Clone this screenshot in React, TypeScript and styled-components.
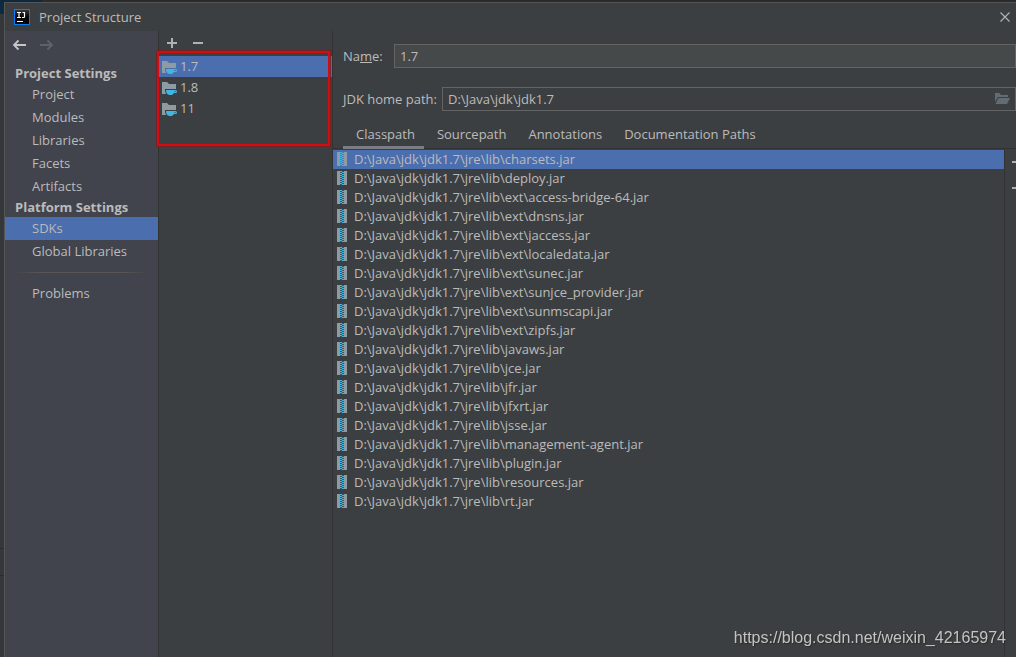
import React, { useState } from "react";
import styled, { createGlobalStyle, css } from "styled-components";

const colors = {
  panel: "#3c3f41",
  sidebar: "#41444d",
  line: "#323232",
  text: "#bbbbbb",
  select: "#4b6eaf",
  field: "#45494a",
  fieldBorder: "#646464",
  icon: "#afb1b3",
};

const GlobalStyle = createGlobalStyle`
  * { box-sizing: border-box; }
  html, body, #root { height: 100%; }
  body {
    margin: 0;
    overflow: hidden;
    background: ${colors.panel};
    color: ${colors.text};
    font: 13px/19px "Open Sans", "Noto Sans", sans-serif;
  }
  button, input { font: inherit; color: inherit; }
  button { border: 0; padding: 0; background: none; text-align: left; }
  ul { list-style: none; margin: 0; padding: 0; }
  svg { display: block; flex: none; }
`;

const Screen = styled.div`
  display: flex;
  flex-direction: column;
  height: 100%;
`;

const EditorTop = styled.div`
  flex: none;
  height: 2px;
  background: linear-gradient(90deg, #0d293e 0 42px, #2b2b2b 42px);
`;

const Desktop = styled.div`
  flex: 1;
  display: flex;
  min-height: 0;
`;

const EditorEdge = styled.div`
  flex: none;
  display: flex;
  flex-direction: column;
  justify-content: flex-end;
  width: 4px;
  background: linear-gradient(#0d2b40 0 12px, #35383a 12px);
`;

const EdgeBlock = styled.div<{ $tall?: boolean }>`
  height: ${(p) => (p.$tall ? 82 : 27)}px;
  border-top: 1px solid #2b2b2b;
`;

const Dialog = styled.main`
  flex: 1;
  min-width: 0;
  display: flex;
  flex-direction: column;
  border: solid #555555;
  border-width: 1px 0 0 1px;
`;

const TitleBar = styled.header`
  flex: none;
  display: flex;
  align-items: center;
  height: 28px;
  padding: 0 3px 0 9px;
  gap: 9px;
`;

const Title = styled.h1`
  flex: 1;
  margin: 0;
  font-size: 13px;
  font-weight: 400;
`;

const Body = styled.div`
  flex: 1;
  display: flex;
  min-height: 0;
`;

const Sidebar = styled.nav`
  flex: none;
  width: 154px;
  background: ${colors.sidebar};
  border-right: 1px solid ${colors.line};
`;

const History = styled.div`
  display: flex;
  align-items: center;
  gap: 11px;
  height: 28px;
  margin-bottom: 5px;
  padding-left: 7px;
`;

const IconButton = styled.button`
  flex: none;
  width: 16px;
  height: 16px;
`;

const GroupTitle = styled.h2`
  margin: 0;
  padding-left: 10px;
  font-size: 13px;
  line-height: 19px;
  font-weight: 700;
`;

const selected = css`
  background: ${colors.select};
`;

const NavItem = styled.button<{ $active?: boolean }>`
  display: block;
  width: 100%;
  height: 23px;
  padding-left: 27px;
  ${(p) => p.$active && selected}
`;

const Divider = styled.hr`
  height: 1px;
  margin: 9px;
  border: 0;
  background: linear-gradient(90deg, transparent, #5a5654 20% 80%, transparent);
`;

const SdkPanel = styled.section`
  position: relative;
  flex: none;
  width: 174px;
  border-right: 1px solid ${colors.line};
`;

const Toolbar = styled.div`
  display: flex;
  align-items: center;
  gap: 10px;
  height: 25px;
  padding: 0 0 2px 5px;
`;

const SdkItem = styled.button<{ $active?: boolean }>`
  display: flex;
  align-items: center;
  gap: 3px;
  width: 100%;
  height: 21px;
  padding-left: 2px;
  ${(p) => p.$active && selected}
`;

const Highlight = styled.div`
  position: absolute;
  top: 20px;
  left: -2px;
  right: 2px;
  height: 95px;
  border: 2px solid #cf0e11;
  box-shadow: 0 0 0 1px #7d1c1ecc;
  pointer-events: none;
`;

const Details = styled.section`
  flex: 1;
  min-width: 0;
  display: flex;
  flex-direction: column;
`;

const Fields = styled.div`
  flex: none;
  display: flex;
  flex-direction: column;
  gap: 19px;
  padding: 13px 0 8px 10px;
`;

const Field = styled.div`
  display: flex;
  align-items: center;
`;

const FieldLabel = styled.label<{ $width: number }>`
  flex: none;
  width: ${(p) => p.$width}px;
  white-space: nowrap;
`;

const InputBox = styled.div<{ $filled?: boolean }>`
  flex: 1;
  min-width: 0;
  display: flex;
  align-items: center;
  height: 24px;
  padding: 0 5px;
  border: 1px solid ${colors.fieldBorder};
  background: ${(p) => (p.$filled ? colors.field : "transparent")};
`;

const Input = styled.input`
  flex: 1;
  min-width: 0;
  padding: 0;
  border: 0;
  outline: 0;
  background: none;
`;

const Tabs = styled.div`
  flex: none;
  display: flex;
  height: 30px;
  padding-left: 10px;
  border-bottom: 1px solid ${colors.line};
`;

const Tab = styled.button<{ $active?: boolean }>`
  height: 30px;
  padding: 6px 9px 2px 13px;
  border-bottom: 3px solid ${(p) => (p.$active ? "#7a7e84" : "transparent")};
  white-space: nowrap;
`;

const Roots = styled.div`
  flex: 1;
  display: flex;
  min-height: 0;
`;

const FileList = styled.ul`
  flex: 1;
  min-width: 0;
  padding-top: 1px;
  border-right: 1px solid ${colors.line};
`;

const FileRow = styled.button<{ $active?: boolean }>`
  display: flex;
  align-items: center;
  gap: 7px;
  width: 100%;
  height: 19px;
  padding-left: 4px;
  white-space: nowrap;
  ${(p) => p.$active && selected}
`;

const SideTools = styled.div`
  flex: none;
  display: flex;
  flex-direction: column;
  gap: 10px;
  width: 11px;
  padding: 5px 0 0 4px;
  overflow: hidden;
`;

const Watermark = styled.div`
  position: fixed;
  right: 10px;
  bottom: 8px;
  color: #c3c4c4;
  font: 16px/22px "Liberation Sans", Arial, sans-serif;
  text-shadow: 1px 1px 1px #2b2b2b;
`;

const AppLogo = () => (
  <svg width="16" height="16" viewBox="0 0 16 16" aria-hidden="true">
    <defs>
      <linearGradient id="logo" x1="0" y1="0" x2="0" y2="1">
        <stop offset="0" stopColor="#3a3a3a" />
        <stop offset="0.5" stopColor="#050505" />
      </linearGradient>
    </defs>
    <rect x="0.5" y="0.5" width="15" height="15" fill="url(#logo)" stroke="#087cfa" />
    <path d="M3 3.5h4M5 3.5v5M3 8.5h4M8.500 3.500h2v4.200q0 .8-.8.8H8" fill="none" stroke="#fff" strokeWidth="1.2" />
    <path d="M3 12.5h6" stroke="#fff" />
  </svg>
);

const Arrow = ({ forward }: { forward?: boolean }) => (
  <svg width="16" height="16" viewBox="0 0 16 16" aria-hidden="true">
    <path
      d={forward ? "M1 8h12M8.5 3.5L13 8l-4.5 4.5" : "M14 8H2M6.5 3.5L2 8l4.5 4.5"}
      fill="none"
      stroke={forward ? "#5f6265" : "#c4c5c7"}
      strokeWidth="1.8"
    />
  </svg>
);

const Sign = ({ plus }: { plus?: boolean }) => (
  <svg width="16" height="16" viewBox="0 0 16 16" shapeRendering="crispEdges" aria-hidden="true">
    <path d={plus ? "M3 7h4V3h2v4h4v2H9v4H7V9H3z" : "M3 7h10v2H3z"} fill={colors.icon} />
  </svg>
);

const Close = () => (
  <svg width="16" height="16" viewBox="0 0 16 16" aria-hidden="true">
    <path d="M3.5 3.5l9 9M12.5 3.5l-9 9" stroke="#b4b6b8" strokeWidth="1.1" />
  </svg>
);

const SdkIcon = () => (
  <svg width="16" height="17" viewBox="0 -1 16 17" aria-hidden="true">
    <path d="M1 2h5l2 2h7v5H4v2l1 3H1z" fill="#8f9ba3" />
    <path d="M5 10h9.500q1.500 0 1.500 1.500T14.500 13h-1.600q-1 2-2.600 2H8.500Q5 14.500 5 10z" fill="#40b6e0" />
    <path d="M13.700 11h.8v1h-1z" fill="#3c3f41" />
  </svg>
);

const FolderIcon = () => (
  <svg width="16" height="16" viewBox="0 0 16 16" aria-hidden="true">
    <path d="M1 2h4.500l1.500 2h7v2H4L1 11z" fill="#626c72" />
    <path d="M4.500 7H16l-3 6H1.500z" fill="#626c72" />
  </svg>
);

const ZIP_ROWS = [0, 2, 4, 6, 8, 10, 12];

const JarIcon = () => (
  <svg width="10" height="15" viewBox="0 0 10 15" shapeRendering="crispEdges" aria-hidden="true">
    <path d="M0 0h3v14H0zM7 0h3v14H7z" fill="#8f9ba3" />
    <path d="M3 0h4v14H3z" fill="#40b6e0" opacity="0.2" />
    {ZIP_ROWS.map((y) => (
      <path key={y} d={`M3 ${y}h2v1H3zM5 ${y + 1}h2v1H5z`} fill="#40b6e0" />
    ))}
  </svg>
);

const PROJECT = ["Project", "Modules", "Libraries", "Facets", "Artifacts"];
const PLATFORM = ["SDKs", "Global Libraries"];
const SDKS = ["1.7", "1.8", "11"];
const TABS = ["Classpath", "Sourcepath", "Annotations", "Documentation Paths"];
const JARS = [
  "charsets", "deploy", "ext\\access-bridge-64", "ext\\dnsns", "ext\\jaccess",
  "ext\\localedata", "ext\\sunec", "ext\\sunjce_provider", "ext\\sunmscapi",
  "ext\\zipfs", "javaws", "jce", "jfr", "jfxrt", "jsse", "management-agent",
  "plugin", "resources", "rt",
];

export default function App() {
  const [page, setPage] = useState("SDKs");
  const [sdk, setSdk] = useState("1.7");
  const [tab, setTab] = useState("Classpath");
  const [jar, setJar] = useState("charsets");

  const navItem = (name: string) => (
    <NavItem key={name} $active={page === name} onClick={() => setPage(name)}>
      {name}
    </NavItem>
  );

  return (
    <Screen>
      <GlobalStyle />
      <EditorTop />
      <Desktop>
        <EditorEdge>
          <EdgeBlock />
          <EdgeBlock $tall />
        </EditorEdge>
        <Dialog>
          <TitleBar>
            <AppLogo />
            <Title>Project Structure</Title>
            <IconButton aria-label="Close"><Close /></IconButton>
          </TitleBar>
          <Body>
            <Sidebar>
              <History>
                <IconButton aria-label="Back"><Arrow /></IconButton>
                <IconButton aria-label="Forward" disabled><Arrow forward /></IconButton>
              </History>
              <GroupTitle>Project Settings</GroupTitle>
              {PROJECT.map(navItem)}
              <GroupTitle>Platform Settings</GroupTitle>
              {PLATFORM.map(navItem)}
              <Divider />
              {navItem("Problems")}
            </Sidebar>
            <SdkPanel>
              <Toolbar>
                <IconButton aria-label="Add SDK"><Sign plus /></IconButton>
                <IconButton aria-label="Remove SDK"><Sign /></IconButton>
              </Toolbar>
              {SDKS.map((name) => (
                <SdkItem key={name} $active={sdk === name} onClick={() => setSdk(name)}>
                  <SdkIcon />
                  {name}
                </SdkItem>
              ))}
              <Highlight />
            </SdkPanel>
            <Details>
              <Fields>
                <Field>
                  <FieldLabel htmlFor="name" $width={51}>Na<u>m</u>e:</FieldLabel>
                  <InputBox $filled>
                    <Input id="name" defaultValue="1.7" />
                  </InputBox>
                </Field>
                <Field>
                  <FieldLabel htmlFor="home" $width={99}>JDK home path:</FieldLabel>
                  <InputBox>
                    <Input id="home" defaultValue={"D:\\Java\\jdk\\jdk1.7"} />
                    <IconButton aria-label="Browse"><FolderIcon /></IconButton>
                  </InputBox>
                </Field>
              </Fields>
              <Tabs role="tablist">
                {TABS.map((name) => (
                  <Tab key={name} role="tab" aria-selected={tab === name} $active={tab === name} onClick={() => setTab(name)}>
                    {name}
                  </Tab>
                ))}
              </Tabs>
              <Roots>
                <FileList>
                  {JARS.map((name) => (
                    <li key={name}>
                      <FileRow $active={jar === name} onClick={() => setJar(name)}>
                        <JarIcon />
                        {`D:\\Java\\jdk\\jdk1.7\\jre\\lib\\${name}.jar`}
                      </FileRow>
                    </li>
                  ))}
                </FileList>
                <SideTools>
                  <IconButton aria-label="Add path"><Sign plus /></IconButton>
                  <IconButton aria-label="Remove path"><Sign /></IconButton>
                </SideTools>
              </Roots>
            </Details>
          </Body>
        </Dialog>
      </Desktop>
      <Watermark>https://blog.csdn.net/weixin_42165974</Watermark>
    </Screen>
  );
}
